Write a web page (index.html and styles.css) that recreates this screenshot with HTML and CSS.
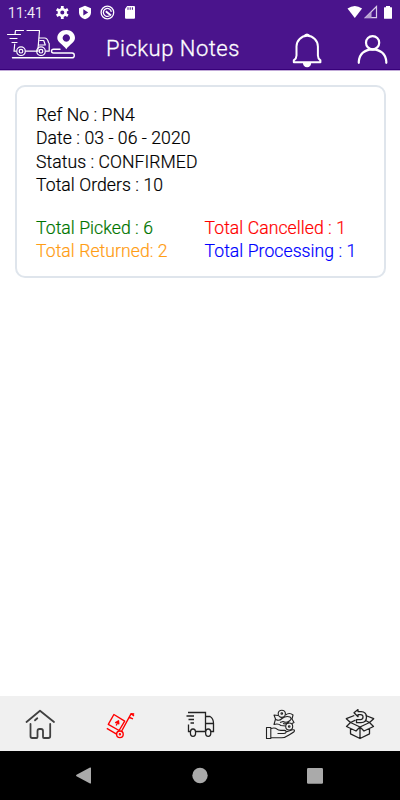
FILE: index.html
```html
<!DOCTYPE html>
<html lang="en">
<head>
<meta charset="utf-8">
<title>Pickup Notes</title>
<link rel="stylesheet" href="styles.css">
</head>
<body>
<div class="screen">
  <header class="header">
    <div class="status">
      <span class="clock">11:41</span>
      <svg class="status-icons" width="82" height="24" viewBox="54 0 82 24">
        <g fill="#fff">
          <circle cx="62.300" cy="12.500" r="3.300" fill="none" stroke="#fff" stroke-width="2.600"/>
          <path d="M62.300 6v3M62.300 16v3M56.700 9.300l2.600 1.500M65.300 14.200l2.600 1.500M56.700 15.700l2.600-1.500M65.300 10.800l2.600-1.500" stroke="#fff" stroke-width="2.800"/>
          <path d="M85 5.700l6 2.500v4c0 3.500-2.500 6-6 7-3.500-1-6-3.500-6-7v-4z"/>
          <path d="M83.300 9.300v6.200l4.900-3.100z" fill="#4a148c"/>
          <path d="M127.200 6h6.800q1 0 1 1v10.700q0 1-1 1h-8q-1 0-1-1V9z"/>
          <path d="M128 7.300v2.500M130.200 7.300v2.500M132.400 7.300v2.500" stroke="#4a148c" stroke-width="1"/>
        </g>
        <g fill="none" stroke="#fff">
          <circle cx="107.400" cy="12.500" r="6.300" stroke-width="1.300"/>
          <path d="M109.500 15.800a4 4 0 1 1 1.800-4" stroke-width="1.300"/>
          <path d="M105.800 11.300l5.200 4.200" stroke-width="2"/>
        </g>
      </svg>
      <svg class="signal-icons" width="48" height="24" viewBox="346 0 48 24">
        <path fill="#fff" d="M347.500 8.500q7.300-5 14.600 0L354.800 18z"/>
        <path fill="none" stroke="#d9cce8" stroke-width="1.200" d="M376.500 6.500v11.200h-11.200z"/>
        <path fill="#b8a1d1" d="M371.500 11.500V18h-6.500z"/>
        <path fill="#fff" d="M386 6h4v1.300h1.500q.5 0 .5.500v10.400q0 .5-.5.500h-7q-.5 0-.5-.5V7.800q0-.5.5-.5H386z"/>
      </svg>
    </div>
    <div class="toolbar">
      <svg class="logo" width="72" height="34" viewBox="6 26 72 34">
        <g fill="none" stroke="#fff" stroke-width="1.200" stroke-linecap="round" stroke-linejoin="round">
          <path d="M15.500 30.500h8M27 30.500h12.500l-1.700 20.700H26M15.500 51.200H14l.7-7M7.500 34.500h13M10 38.500h7M12 42.500h5M15.500 30.500l-.5 4M39 38h5.500q3 0 4 4.500l.7 1v7.700h-3M40 40.500h3.700l1.600 4.500h-5.900M38 51.200h-2"/>
          <circle cx="21" cy="51.200" r="4.300"/><circle cx="21" cy="51.200" r="1.800"/>
          <circle cx="41" cy="51.200" r="4.300"/><circle cx="41" cy="51.200" r="1.800"/>
          <path d="M60 49.200h-6.500q-2 0-2 1.900t2 1.900h18.500q2.300 0 2.300 2.400t-2.300 2.400H12.500" stroke-width="1.400"/>
        </g>
        <path fill="#fff" fill-rule="evenodd" d="M66.300 49.200c-3-4.500-9-6.700-9-11.200 0-4.700 4-8 9-8s8.700 3.300 8.700 8c0 4.500-5.700 6.700-8.700 11.200zM66.300 34.300a3.700 3.700 0 1 0 .01 0z"/>
      </svg>
      <h1 class="title">Pickup Notes</h1>
      <svg class="bell" width="32" height="36" viewBox="291 32 32 36">
        <path fill="none" stroke="#fff" stroke-width="2" stroke-linejoin="round" d="M293.800 62.200v-1.800q2.700-2 2.700-5v-8.900a10.700 10.700 0 0 1 21.400 0v8.900q0 3 2.500 5v1.800z"/>
        <path fill="#fff" d="M303.500 36a3.700 3.700 0 0 1 7 0zM302.800 62.500h8.500q-.4 4.700-4.200 4.700t-4.300-4.700z"/>
      </svg>
      <svg class="person" width="34" height="34" viewBox="355 32 34 34">
        <g fill="none" stroke="#fff" stroke-width="2.200" stroke-linecap="round">
          <circle cx="372.600" cy="42.700" r="6.600"/>
          <path d="M358.800 62.800v-1.300q1-11.500 13.700-12.200 12.800.7 13.800 12.200v1.300"/>
        </g>
      </svg>
    </div>
  </header>

  <main class="content">
    <section class="card">
      <p>Ref No : PN4</p>
      <p>Date : 03 - 06 - 2020</p>
      <p>Status : CONFIRMED</p>
      <p>Total Orders : 10</p>
      <div class="totals">
        <p class="picked">Total Picked : 6</p>
        <p class="cancelled">Total Cancelled : 1</p>
        <p class="returned">Total Returned: 2</p>
        <p class="processing">Total Processing : 1</p>
      </div>
    </section>
  </main>

  <nav class="tabs">
    <svg width="40" height="40" viewBox="20 704 40 40">
      <g fill="none" stroke="#404040" stroke-width="1.800" stroke-linecap="round" stroke-linejoin="round">
        <path d="M26.500 722L40 710.800 54 722M30.500 724v12.300q0 1.700 1.700 1.700h4.300q1 0 1-1v-6q0-2 2-2h1.500q2 0 2 2v6q0 1 1 1h4.300q1.900 0 1.900-1.700V724M35 720.300l2.300-2"/>
      </g>
    </svg>
    <svg width="40" height="40" viewBox="100 704 40 40">
      <g fill="none" stroke="#f00" stroke-width="1.400" stroke-linejoin="round">
        <path d="M106.800 728.300l10.200 6M113.900 714.500l10.800 6.700-5.600 9.300-10.800-6.200zM121.700 731l9.300-17.200 3 2.200M130.700 713.700l3.500.3M129.500 717.500l3.500 1.300"/>
        <circle cx="119.900" cy="734.300" r="3.300"/><circle cx="119.900" cy="734.300" r=".5"/>
        <path d="M116.200 725.500l2-4M115.200 722.800l3.300-2 .3 3.600"/>
      </g>
    </svg>
    <svg width="40" height="40" viewBox="180 704 40 40">
      <g fill="none" stroke="#222" stroke-width="1.300">
        <path d="M188 712.500h17.500v19M186.500 716h7.500M188.500 719.500h5.500M190.500 723h3.500M188.500 724.500v7h1.500M196 731.500h9M205.700 716.500h4.300q3.500 2 3.500 7v8h-2.500M206 723.500h7.500"/>
        <ellipse cx="193" cy="732.700" rx="2.600" ry="3.700"/><ellipse cx="208.200" cy="732.700" rx="2.600" ry="3.700"/>
      </g>
    </svg>
    <svg width="40" height="40" viewBox="260 704 40 40">
      <g fill="none" stroke="#222" stroke-width="1.100" stroke-linejoin="round">
        <path d="M266.500 727.500h4.300v11h-4.300zM271 728.500q4-1.300 6 .7 1 1.200 4 1.200h3.500q2 .2 1.500 1.800-.5 1.300-2.500 1.300h-6M286 732l6.500-2.200q2.500-.4 1.800 1.500-.8 1-5.300 3.700-4 2.800-7.500 2.800L271 737.500"/>
        <path d="M278 715.500l-4-.5 1.500 4-1.500 5.500q4-1.500 7 1l4.500.5M285.500 715q4-3 7.500 0l-1 4 2 3.500-2 1M276 719.500q3 2 6-1 4-3 8-1.500 2 1.500 0 3.500-3 3-7 1l-3 1M283 723.500q3 1 6-1"/>
        <circle cx="281.800" cy="713.800" r="3.600"/><circle cx="281.800" cy="713.500" r=".8"/>
        <circle cx="289.200" cy="726.500" r="3.500"/><circle cx="289.200" cy="726.500" r=".8"/>
      </g>
    </svg>
    <svg width="40" height="40" viewBox="340 704 40 40">
      <g fill="none" stroke="#222" stroke-width="1.300" stroke-linejoin="round">
        <path d="M350.500 728v5.800l9.500 4.700 9.500-4.700V728M360 727v11.500M360 727l-9.500-4.500-4 4 9.500 4.500zM360 727l9.500-4.500 4 4-9.500 4.500zM350.500 722.500l-4.200-3.800 8-3.200M369.500 722.500l4.200-3.800-8-3.200M350.500 722.500l5-2.400M369.500 722.500l-4-2"/>
        <path d="M354 712.700l4-3.100v2h3q5.500.2 5.500 5.500 0 5.600-5.500 5.600h-4.500v-3.100h4q2.500 0 2.500-2.500t-2.500-2.400H358v2z"/>
      </g>
    </svg>
  </nav>

  <div class="system-nav">
    <svg width="24" height="24" viewBox="71 764 24 24"><path fill="#aaa" d="M76.500 774.800L90 767.500q1-.4 1 .6v14.800q0 1-1 .6l-13.500-7.300q-1-.7 0-1.400z"/></svg>
    <svg class="home-key" width="24" height="24" viewBox="188 764 24 24"><circle cx="200" cy="775.500" r="7.700" fill="#aaa"/></svg>
    <svg width="24" height="24" viewBox="303 764 24 24"><rect x="307" y="768" width="16" height="15.700" rx="1.200" fill="#aaa"/></svg>
  </div>
</div>
</body>
</html>
```
FILE: styles.css
```css
* { box-sizing: border-box; }
body { margin: 0; background: #fff; font-family: Roboto, "Liberation Sans", sans-serif; }
svg { display: block; flex: none; }
.screen { width: 400px; height: 800px; display: flex; flex-direction: column; }
.header { height: 71px; background: #4a148c; border-bottom: 1px solid #c1aad8; box-shadow: inset 0 -1px #38007a; }
.status { height: 24px; display: flex; align-items: center; padding: 0 6px 0 8px; }
.clock { width: 46px; padding-top: 2px; font-size: 14px; font-weight: 300; line-height: 20px; letter-spacing: .2px; color: #fff; -webkit-text-stroke: .2px; }
.signal-icons { margin-left: auto; }
.toolbar { display: flex; align-items: flex-start; padding: 2px 11px 0 6px; }
.title { margin: 10px 0 0 28px; width: 140px; font-size: 22px; font-weight: 300; line-height: 26px; letter-spacing: .5px; white-space: nowrap; color: #fff; -webkit-text-stroke: .3px; }
.bell { margin: 6px 0 0 auto; }
.person { margin: 6px 0 0 32px; }
.content { flex: 1; padding: 14px 14.5px; }
.card { width: 371px; height: 193px; border: 2px solid #dfe5ec; border-radius: 10px; padding: 17px 19.5px; font-size: 17.6px; font-weight: 300; line-height: 23.3px; letter-spacing: .06px; color: #000; white-space: nowrap; -webkit-text-stroke: .2px; }
.card p { margin: 0; }
.totals { display: grid; grid-template-columns: 168.5px 1fr; margin-top: 19.5px; }
.picked { color: #007500; }
.cancelled { color: #f00; }
.returned { color: #ff9d15; }
.processing { color: #00f; }
.tabs { height: 55px; background: #f0f0f0; display: flex; justify-content: space-around; padding: 8px 0 0; }
.tabs svg { margin: 0 20px; }
.system-nav { height: 49px; background: #000; display: flex; justify-content: space-between; padding: 13px 73px 0 71px; }
.home-key { margin-left: 2px; }
```
